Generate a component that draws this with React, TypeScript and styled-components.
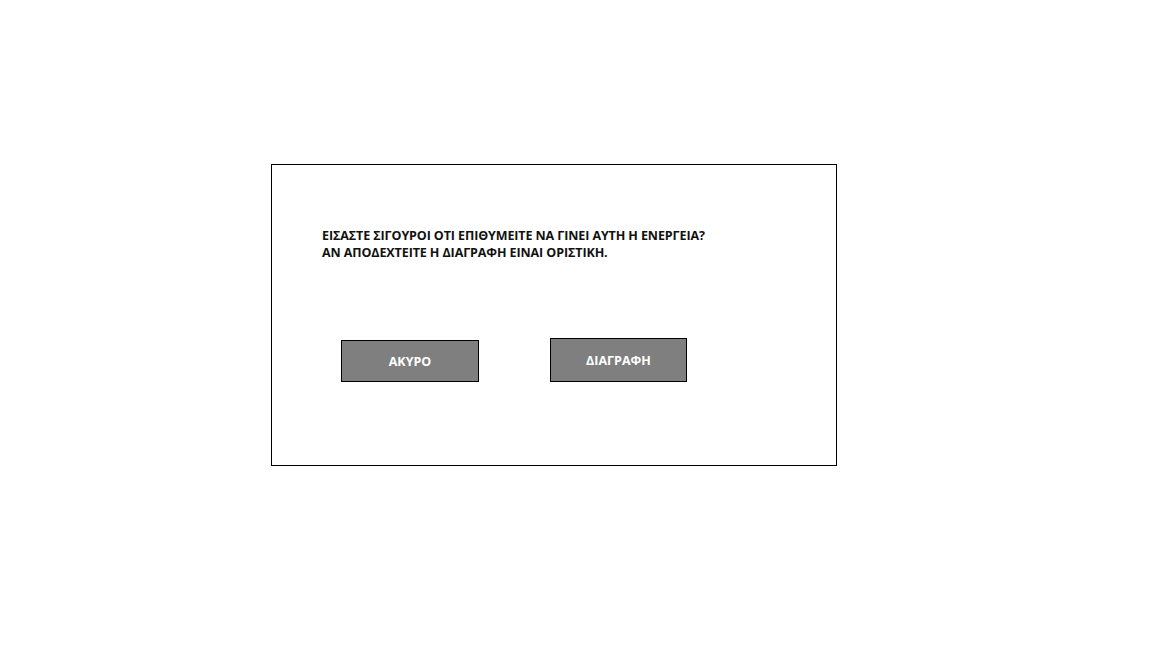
import styled, { createGlobalStyle } from 'styled-components';

const GlobalStyle = createGlobalStyle`
  html, body {
    margin: 0;
    padding: 0;
    background: #ffffff;
  }
  body {
    font-family: 'Open Sans', 'Liberation Sans', sans-serif;
  }
`;

const St = {
  Page: styled.div`
    width: 1152px;
    height: 648px;
    padding: 164px 0 0 271px;
    box-sizing: border-box;
  `,
  Dialog: styled.div`
    width: 566px;
    height: 302px;
    box-sizing: border-box;
    border: 1px solid #000;
    display: flex;
    flex-direction: column;
  `,
  Message: styled.p`
    margin: 62px 0 0 50px;
    font-size: 12.5px;
    font-weight: 700;
    line-height: 17px;
    color: #111;
    letter-spacing: -0.1px;
  `,
  Actions: styled.div`
    display: flex;
    align-items: flex-end;
    gap: 71px;
    margin: 77px 0 0 69px;
  `,
  Button: styled.button<{ $tall?: boolean }>`
    width: ${(p) => (p.$tall ? 137 : 138)}px;
    height: ${(p) => (p.$tall ? 44 : 42)}px;
    box-sizing: border-box;
    border: 1px solid #000;
    background: #7f7f7f;
    color: #fff;
    font-family: 'Open Sans', 'Liberation Sans', sans-serif;
    font-size: 12.5px;
    font-weight: 700;
    padding: 0;
    cursor: pointer;
  `,
};

const App = () => {
  return (
    <>
      <GlobalStyle />
      <St.Page>
        <St.Dialog>
          <St.Message>
            ΕΙΣΑΣΤΕ ΣΙΓΟΥΡΟΙ ΟΤΙ ΕΠΙΘΥΜΕΙΤΕ ΝΑ ΓΙΝΕΙ ΑΥΤΗ Η ΕΝΕΡΓΕΙΑ?
            <br />
            ΑΝ ΑΠΟΔΕΧΤΕΙΤΕ Η ΔΙΑΓΡΑΦΗ ΕΙΝΑΙ ΟΡΙΣΤΙΚΗ.
          </St.Message>
          <St.Actions>
            <St.Button>ΑΚΥΡΟ</St.Button>
            <St.Button $tall>ΔΙΑΓΡΑΦΗ</St.Button>
          </St.Actions>
        </St.Dialog>
      </St.Page>
    </>
  );
};

export default App;
